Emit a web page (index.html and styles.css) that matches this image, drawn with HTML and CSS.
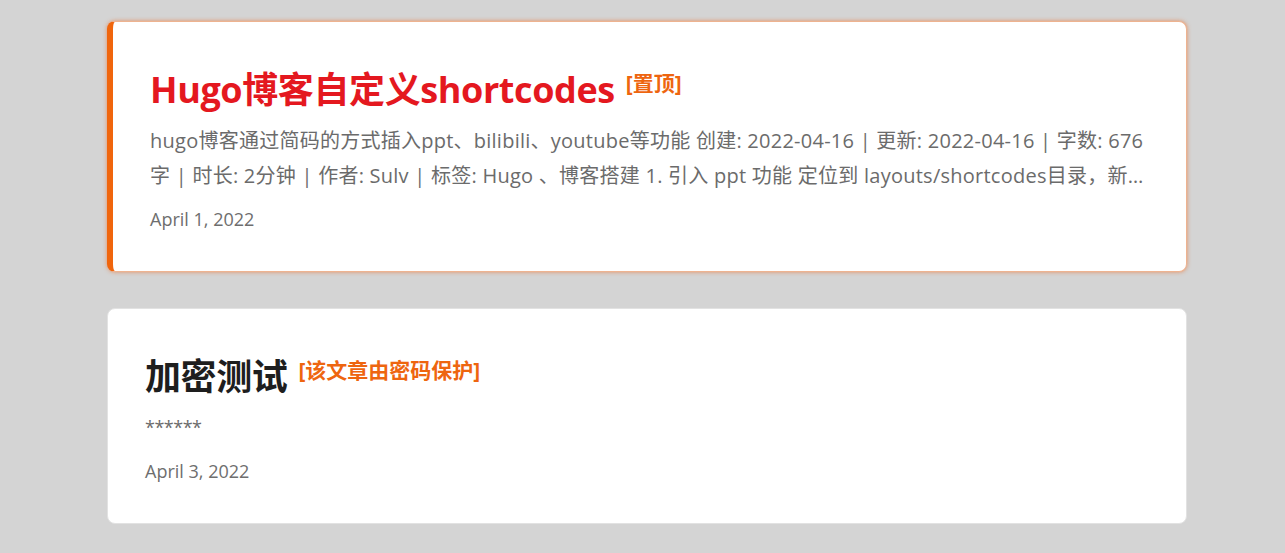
FILE: index.html
```html
<!DOCTYPE html>
<html lang="zh-CN">
<head>
<meta charset="utf-8">
<title>文章列表</title>
<link rel="stylesheet" href="styles.css">
</head>
<body>
<main class="post-list">
  <article class="post-card post-card--pinned">
    <h2 class="post-title">
      <span class="post-title-text">Hugo博客自定义shortcodes</span>
      <span class="post-badge">[置顶]</span>
    </h2>
    <p class="post-summary post-summary--clamp">hugo博客通过简码的方式插入ppt、bilibili、youtube等功能 创建: 2022-04-16 | 更新: 2022-04-16 | 字数: 676 字 | 时长: 2分钟 | 作者: Sulv | 标签: Hugo 、博客搭建 1. 引入 ppt 功能 定位到 layouts/shortcodes目录，新建 ppt.html 文件，写入如下内容</p>
    <div class="post-date">April 1, 2022</div>
  </article>
  <article class="post-card">
    <h2 class="post-title">
      <span class="post-title-text">加密测试</span>
      <span class="post-badge">[该文章由密码保护]</span>
    </h2>
    <p class="post-summary post-summary--masked">******</p>
    <div class="post-date">April 3, 2022</div>
  </article>
</main>
</body>
</html>
```
FILE: styles.css
```css
* {
  box-sizing: border-box;
}

html,
body {
  margin: 0;
  background: #d4d4d4;
}

body {
  font-family: "Segoe UI", "Microsoft YaHei", "Open Sans", "Noto Sans CJK SC", sans-serif;
  color: #6b6b6b;
}

.post-list {
  width: 1089px;
  margin: 0 auto;
  padding: 21px 0 40px 9px;
  display: flex;
  flex-direction: column;
  gap: 36px;
}

.post-card {
  background: #ffffff;
  border: 1px solid #e2e2e2;
  border-radius: 8px;
  padding: 38px 38px 38px 37px;
}

.post-card--pinned {
  border-color: #eeb390;
  border-left: 6px solid #f0650c;
  box-shadow: 0 0 4px rgba(232, 120, 60, 0.75);
}

.post-title {
  margin: 0;
  display: flex;
  align-items: flex-start;
  gap: 11px;
  font-size: 36px;
  line-height: 60px;
  font-weight: 700;
  color: #1e1e1e;
}

.post-title-text {
  letter-spacing: -0.4px;
}

.post-card--pinned .post-title {
  color: #e4181f;
}

.post-badge {
  margin-top: 11px;
  font-size: 21px;
  line-height: 25px;
  font-weight: 700;
  color: #ee650f;
}

.post-summary {
  margin: 3px 0 0;
  font-size: 20px;
  line-height: 35px;
  color: #6b6b6b;
}

.post-summary--clamp {
  letter-spacing: 0.25px;
  display: -webkit-box;
  -webkit-box-orient: vertical;
  -webkit-line-clamp: 2;
  overflow: hidden;
}

.post-summary--masked {
  font-size: 18px;
  letter-spacing: -0.5px;
}

.post-date {
  margin-top: 13px;
  font-size: 18px;
  line-height: 27px;
  color: #6e6e6e;
}
```
